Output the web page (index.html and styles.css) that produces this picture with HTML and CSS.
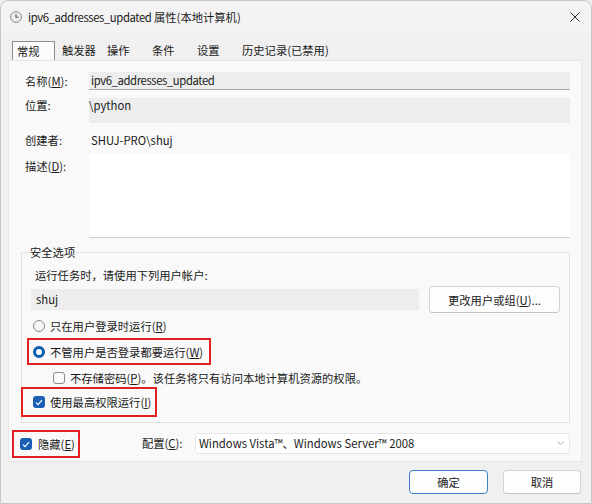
FILE: index.html
```html
<!DOCTYPE html>
<html lang="zh-CN">
<head>
<meta charset="utf-8">
<title>ipv6_addresses_updated 属性(本地计算机)</title>
<link rel="stylesheet" href="styles.css">
</head>
<body>
<div class="window">
  <div class="titlebar">
    <svg class="app-icon" width="12" height="12" viewBox="0 0 12 12"><circle cx="6" cy="6" r="5.4" fill="#ededed" stroke="#8c8c8c" stroke-width="1"/><path d="M6 2.8V6.3h2.6" fill="none" stroke="#5a5a5a" stroke-width="1.1"/></svg>
    <span class="title"><span class="tn">ipv6_addresses_updated</span> 属性(本地计算机)</span>
    <svg class="close" width="10" height="10" viewBox="0 0 10 10"><path d="M0.5 0.5l9 9M9.5 0.5l-9 9" stroke="#2b2b2b" stroke-width="1"/></svg>
  </div>
  <div class="tabs">
    <span class="tab active">常规</span>
    <span class="tab">触发器</span>
    <span class="tab">操作</span>
    <span class="tab">条件</span>
    <span class="tab">设置</span>
    <span class="tab last">历史记录(已禁用)</span>
  </div>
  <div class="panel">
    <div class="row r-name"><span class="label">名称(<u>M</u>):</span><div class="field f-name"><span class="tn">ipv6_addresses_updated</span></div></div>
    <div class="row r-loc"><span class="label">位置:</span><div class="field f-loc">\python</div></div>
    <div class="row r-author"><span class="label">创建者:</span><span class="value">SHUJ-PRO\shuj</span></div>
    <div class="row r-desc"><span class="label">描述(<u>D</u>):</span><div class="desc"></div></div>
    <fieldset class="group">
      <legend>安全选项</legend>
      <div class="hint">运行任务时，请使用下列用户帐户:</div>
      <div class="user-row">
        <div class="field f-user">shuj</div>
        <button class="btn btn-change">更改用户或组(<u>U</u>)...</button>
      </div>
      <div class="opt o1"><span class="radio"></span><span>只在用户登录时运行(<u>R</u>)</span></div>
      <div class="opt o2 mark"><span class="radio on"></span><span>不管用户是否登录都要运行(<u>W</u>)</span></div>
      <div class="opt o3"><span class="check"></span><span>不存储密码(<u>P</u>)。该任务将只有访问本地计算机资源的权限。</span></div>
      <div class="opt o4 mark"><span class="check on"><svg width="8" height="7" viewBox="0 0 8 7"><path d="M1 3.6l2 2L7 1.2" fill="none" stroke="#fff" stroke-width="1.2"/></svg></span><span>使用最高权限运行(<u>I</u>)</span></div>
    </fieldset>
    <div class="bottom-row">
      <div class="opt o5 mark"><span class="check on"><svg width="8" height="7" viewBox="0 0 8 7"><path d="M1 3.6l2 2L7 1.2" fill="none" stroke="#fff" stroke-width="1.2"/></svg></span><span>隐藏(<u>E</u>)</span></div>
      <span class="cfg-label">配置(<u>C</u>):</span>
      <div class="select"><span>Windows Vista™、Windows Server™ 2008</span><svg class="chev" width="7" height="4" viewBox="0 0 7 4"><path d="M0.5 0.5l3 3 3-3" fill="none" stroke="#a0a0a0" stroke-width="0.9"/></svg></div>
    </div>
  </div>
  <div class="buttons">
    <button class="btn btn-ok">确定</button>
    <button class="btn btn-cancel">取消</button>
  </div>
</div>
</body>
</html>
```

FILE: styles.css
```css
html, body {
  margin: 0;
  padding: 0;
}
body {
  background: #f0f0f0;
  font-family: "Noto Sans CJK SC", "Noto Sans", sans-serif;
  font-size: 11.3px;
  line-height: 16px;
  color: #1a1a1a;
}
u {
  text-decoration: underline;
  text-underline-offset: 1px;
}
.tn {
  letter-spacing: -0.4px;
}
.window {
  width: 592px;
  height: 504px;
  box-sizing: border-box;
  border: 1px solid #c6c6c6;
  border-radius: 8px 8px 0 0;
  background: #f0f0f0;
  overflow: hidden;
}
.titlebar {
  height: 31px;
  display: flex;
  align-items: center;
  padding-left: 9px;
  background: #f3f3f3;
}
.app-icon {
  flex: none;
  margin-right: 6px;
}
.title {
  flex: 1;
}
.close {
  margin-right: 11px;
}
.tabs {
  display: flex;
  height: 28px;
  box-sizing: border-box;
  padding: 9px 0 0 11px;
}
.tab {
  width: 45px;
  box-sizing: border-box;
  padding-left: 7px;
  height: 19px;
  line-height: 19px;
  white-space: nowrap;
}
.tab.active {
  width: 43px;
  padding-left: 4px;
  background: #fbfbfb;
  border: 1px solid #8e8e8e;
  border-bottom: none;
  line-height: 18px;
  height: 19px;
}
.tab.last {
  width: auto;
}
.panel {
  margin: 0 9px 0 7px;
  height: 402px;
  box-sizing: border-box;
  background: #f9f9f9;
  border: 1px solid #e6e6e6;
  padding: 11px 11px 0 11px;
}
.row {
  display: flex;
  padding-left: 5px;
}
.label {
  width: 64px;
  flex: none;
  white-space: nowrap;
}
.field {
  background: #ededed;
  box-sizing: border-box;
}
.r-name {
  align-items: center;
  height: 18px;
}
.f-name {
  flex: 1;
  height: 18px;
  line-height: 16px;
  padding-left: 2px;
  border-bottom: 1px solid #a9a9a9;
}
.r-loc {
  margin-top: 8px;
  align-items: flex-start;
}
.r-loc .label {
  line-height: 14px;
}
.f-loc {
  flex: 1;
  height: 25px;
  line-height: 14px;
  padding-left: 0;
}
.r-author {
  margin-top: 9px;
  height: 16px;
}
.value {
  padding-left: 2px;
}
.r-desc {
  margin-top: 6px;
}
.r-desc .label {
  padding-top: 4px;
}
.desc {
  flex: 1;
  height: 84px;
  box-sizing: border-box;
  background: #ffffff;
  border-bottom: 1px solid #cfcfcf;
}
.group {
  margin: 6px 0 0 1px;
  padding: 7px 0 5px 0;
  border: 1px solid #e2e2e2;
  min-width: 0;
}
.group legend {
  margin-left: 7px;
  padding: 0 1px;
  line-height: 16px;
}
.hint {
  margin-left: 13px;
  height: 16px;
}
.user-row {
  display: flex;
  align-items: center;
  margin-top: 3px;
  height: 27px;
}
.f-user {
  margin-left: 9px;
  width: 388px;
  height: 21px;
  line-height: 21px;
  padding-left: 5px;
}
.btn {
  font: inherit;
  color: #1a1a1a;
  background: #fdfdfd;
  border: 1px solid #d3d3d3;
  border-bottom-color: #c2c2c2;
  border-radius: 4px;
  padding: 0;
  box-sizing: border-box;
}
.btn-change {
  margin-left: 10px;
  width: 131px;
  height: 27px;
}
.opt {
  display: flex;
  align-items: center;
  white-space: nowrap;
}
.mark {
  border: 2px solid #e32020;
  width: max-content;
  box-sizing: border-box;
}
.o1 {
  margin-top: 5px;
  height: 16px;
  padding-left: 11px;
}
.o2 {
  margin-top: 4px;
  margin-left: 5px;
  height: 27px;
  padding: 0 6px 0 4px;
}
.o3 {
  margin-top: 5px;
  height: 16px;
  padding-left: 31px;
}
.o4 {
  margin-top: 1px;
  margin-left: -1px;
  height: 30px;
  padding: 0 4px 0 10px;
}
.radio {
  width: 12px;
  height: 12px;
  box-sizing: border-box;
  border-radius: 50%;
  border: 1px solid #8a8a8a;
  background: #f6f6f6;
  margin-right: 5px;
  flex: none;
}
.radio.on {
  border: 3.5px solid #0a5cb0;
  background: #ffffff;
}
.check {
  width: 12px;
  height: 12px;
  box-sizing: border-box;
  border-radius: 3px;
  border: 1px solid #8a8a8a;
  background: #fbfbfb;
  margin-right: 5px;
  flex: none;
  display: flex;
  align-items: center;
  justify-content: center;
}
.check.on {
  border: none;
  background: #1a5fb4;
}
.bottom-row {
  display: flex;
  align-items: center;
  margin-top: 5px;
}
.o5 {
  margin-left: -8px;
  height: 28px;
  padding: 0 3px 0 6px;
  margin-top: 2px;
}
.o5 .check {
  margin-right: 6px;
}
.cfg-label {
  margin-left: 62px;
  width: 53px;
  flex: none;
}
.select {
  width: 377px;
  height: 21px;
  box-sizing: border-box;
  background: #ffffff;
  border: 1px solid #e6e6e6;
  border-radius: 3px;
  display: flex;
  align-items: center;
  justify-content: space-between;
  padding: 0 5px 0 3px;
  white-space: nowrap;
}
.buttons {
  display: flex;
  justify-content: flex-end;
  gap: 15px;
  margin-top: 8px;
  padding-right: 10px;
}
.btn-ok {
  width: 79px;
  height: 24px;
  border: 1px solid #3c7fc9;
}
.btn-cancel {
  width: 78px;
  height: 24px;
}
```
